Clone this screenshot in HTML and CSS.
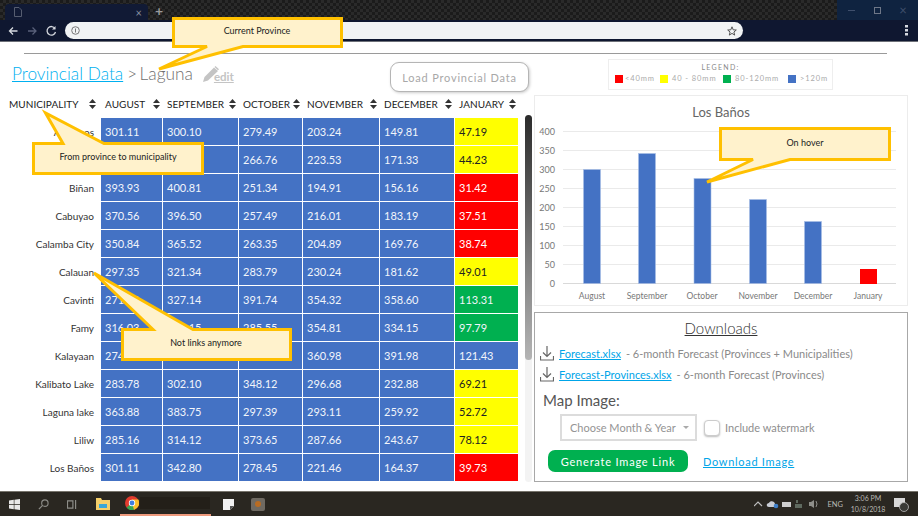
FILE: index.html
```
<!DOCTYPE html>
<html lang="en">
<head>
<meta charset="utf-8">
<title>Provincial Data</title>
<link rel="stylesheet" href="styles.css">
</head>
<body>
<div class="screen">
  <header class="chrome">
    <div class="tabstrip">
      <div class="tab">
        <svg class="tab-doc" width="8" height="10" viewBox="0 0 8 10"><path d="M.5.500h4.500L7.500 3v6.500H.5z" fill="none" stroke="#565d70"/></svg>
        <span class="tab-close">×</span>
      </div>
      <span class="tab-new">+</span>
      <div class="winctl">
        <span class="win-min"></span>
        <span class="win-max"></span>
        <span class="win-close">×</span>
      </div>
    </div>
    <div class="toolbar">
      <svg class="nav" width="50" height="12" viewBox="0 0 50 12">
        <path d="M9.500 6H1.500M5 2.500 1.500 6 5 9.500" fill="none" stroke="#d5d8de" stroke-width="1.300"/>
        <path d="M20 6h8M24.500 2.500 28 6l-3.500 3.500" fill="none" stroke="#59607a" stroke-width="1.300"/>
        <path d="M47 3.500A4.300 4.300 0 1 0 47.500 7" fill="none" stroke="#d5d8de" stroke-width="1.300"/><path d="M47.500 1v3.500H44z" fill="#d5d8de"/>
      </svg>
      <div class="omnibox">
        <svg width="9" height="9" viewBox="0 0 9 9"><circle cx="4.500" cy="4.500" r="3.800" fill="none" stroke="#777"/><path d="M4.500 2.500v4" stroke="#777"/></svg>
        <svg width="10" height="10" viewBox="0 0 10 10"><path d="M5 .8 6.200 3.800 9.300 4 6.900 6 7.700 9.100 5 7.400 2.300 9.100 3.100 6 .7 4 3.800 3.800z" fill="none" stroke="#555"/></svg>
      </div>
      <svg class="menu-dots" width="3" height="11" viewBox="0 0 3 11"><path d="M0 0h3v2.500H0zM0 4h3v2.500H0zM0 8h3v2.500H0z" fill="#d5d8de"/></svg>
    </div>
  </header>

  <main class="page">
    <hr class="rule">
    <div class="topbar">
      <div class="heading">
        <h1 class="crumbs"><a class="crumb-link" href="#">Provincial Data</a><span class="crumb-sep"> &gt; </span>Laguna</h1>
        <span class="edit">
          <svg width="18" height="18" viewBox="0 0 18 18"><path d="M1 17 2.500 12 12 2.500 16 6 6 15.500z" fill="#c4c4c4"/><path d="M13 1.500l3.500 3.300" stroke="#c4c4c4" stroke-width="1.500"/></svg>
          <span class="edit-text">edit</span>
        </span>
      </div>
      <button class="load-btn" type="button">Load Provincial Data</button>
      <div class="legend">
        <div class="legend-title">LEGEND:</div>
        <div class="legend-items">
          <i class="sw sw-red"></i><span class="lg lg1">&lt;40mm</span>
          <i class="sw sw-yellow"></i><span class="lg lg2">40 - 80mm</span>
          <i class="sw sw-green"></i><span class="lg lg3">80-120mm</span>
          <i class="sw sw-blue"></i><span class="lg lg4">&gt;120m</span>
        </div>
      </div>
    </div>

    <div class="content">
      <section class="table-wrap">
        <table class="data">
          <colgroup><col class="c0"><col class="c1"><col class="c2"><col class="c3"><col class="c4"><col class="c5"><col class="c6"></colgroup>
          <thead>
            <tr>
              <th><span class="th-in th-mun">MUNICIPALITY<svg class="sort" viewBox="0 0 7 10"><path d="M3.500 0 7 4H0zM3.500 10 0 6h7z"/></svg></span></th>
              <th><span class="th-in">AUGUST<svg class="sort" viewBox="0 0 7 10"><path d="M3.500 0 7 4H0zM3.500 10 0 6h7z"/></svg></span></th>
              <th><span class="th-in">SEPTEMBER<svg class="sort" viewBox="0 0 7 10"><path d="M3.500 0 7 4H0zM3.500 10 0 6h7z"/></svg></span></th>
              <th><span class="th-in">OCTOBER<svg class="sort" viewBox="0 0 7 10"><path d="M3.500 0 7 4H0zM3.500 10 0 6h7z"/></svg></span></th>
              <th><span class="th-in">NOVEMBER<svg class="sort" viewBox="0 0 7 10"><path d="M3.500 0 7 4H0zM3.500 10 0 6h7z"/></svg></span></th>
              <th><span class="th-in">DECEMBER<svg class="sort" viewBox="0 0 7 10"><path d="M3.500 0 7 4H0zM3.500 10 0 6h7z"/></svg></span></th>
              <th><span class="th-in">JANUARY<svg class="sort" viewBox="0 0 7 10"><path d="M3.500 0 7 4H0zM3.500 10 0 6h7z"/></svg></span></th>
            </tr>
          </thead>
          <tbody>
            <tr><th>Alaminos</th><td>301.11</td><td>300.10</td><td>279.49</td><td>203.24</td><td>149.81</td><td class="y">47.19</td></tr>
            <tr><th></th><td></td><td></td><td>266.76</td><td>223.53</td><td>171.33</td><td class="y">44.23</td></tr>
            <tr><th>Biñan</th><td>393.93</td><td>400.81</td><td>251.34</td><td>194.91</td><td>156.16</td><td class="r">31.42</td></tr>
            <tr><th>Cabuyao</th><td>370.56</td><td>396.50</td><td>257.49</td><td>216.01</td><td>183.19</td><td class="r">37.51</td></tr>
            <tr><th>Calamba City</th><td>350.84</td><td>365.52</td><td>263.35</td><td>204.89</td><td>169.76</td><td class="r">38.74</td></tr>
            <tr><th>Calauan</th><td>297.35</td><td>321.34</td><td>283.79</td><td>230.24</td><td>181.62</td><td class="y">49.01</td></tr>
            <tr><th>Cavinti</th><td>271.80</td><td>327.14</td><td>391.74</td><td>354.32</td><td>358.60</td><td class="g">113.31</td></tr>
            <tr><th>Famy</th><td>316.03</td><td>340.15</td><td>285.55</td><td>354.81</td><td>334.15</td><td class="g">97.79</td></tr>
            <tr><th>Kalayaan</th><td>274.36</td><td></td><td></td><td>360.98</td><td>391.98</td><td>121.43</td></tr>
            <tr><th>Kalibato Lake</th><td>283.78</td><td>302.10</td><td>348.12</td><td>296.68</td><td>232.88</td><td class="y">69.21</td></tr>
            <tr><th>Laguna lake</th><td>363.88</td><td>383.75</td><td>297.39</td><td>293.11</td><td>259.92</td><td class="y">52.72</td></tr>
            <tr><th>Liliw</th><td>285.16</td><td>314.12</td><td>373.65</td><td>287.66</td><td>243.67</td><td class="y">78.12</td></tr>
            <tr><th>Los Baños</th><td>301.11</td><td>342.80</td><td>278.45</td><td>221.46</td><td>164.37</td><td class="r">39.73</td></tr>
          </tbody>
        </table>
        <div class="scrollbar"><div class="thumb"></div></div>
      </section>

      <aside class="side">
        <figure class="chart">
          <svg width="372" height="209" viewBox="535 97 372 209">
            <g class="grid">
              <path d="M563 132.500h333M563 151.500h333M563 170.500h333M563 189.500h333M563 208.500h333M563 227.500h333M563 246.500h333M563 265.500h333"/>
              <path class="axis" d="M563 284.500h333"/>
            </g>
            <text class="ch-title" x="721" y="118">Los Baños</text>
            <g class="ylab">
              <text x="555" y="135.500">400</text><text x="555" y="154.500">350</text><text x="555" y="173.500">300</text><text x="555" y="192.500">250</text><text x="555" y="211.500">200</text><text x="555" y="230.500">150</text><text x="555" y="249.500">100</text><text x="555" y="268.500">50</text><text x="555" y="287.500">0</text>
            </g>
            <g class="bars">
              <rect x="583.500" y="170.500" width="17" height="114"/>
              <rect x="638.500" y="154.500" width="17" height="130"/>
              <rect x="694" y="179.500" width="17" height="105"/>
              <rect x="749.500" y="200.500" width="17" height="84"/>
              <rect x="804.500" y="222.500" width="17" height="62"/>
            </g>
            <rect class="bar-red" x="860" y="270" width="17" height="15"/>
            <g class="xlab">
              <text x="592" y="300">August</text><text x="647" y="300">September</text><text x="702" y="300">October</text><text x="758" y="300">November</text><text x="813" y="300">December</text><text x="868" y="300">January</text>
            </g>
          </svg>
        </figure>

        <section class="downloads">
          <h2 class="dl-title">Downloads</h2>
          <div class="dl-row">
            <svg width="14" height="15" viewBox="0 0 14 15"><path d="M7 0v10M3 6.500 7 10.500l4-4M.5 10v4h13v-4" fill="none" stroke="#666" stroke-width="1.200"/></svg>
            <a class="link" href="#">Forecast.xlsx</a><span class="dl-desc">- 6-month Forecast (Provinces + Municipalities)</span>
          </div>
          <div class="dl-row">
            <svg width="14" height="15" viewBox="0 0 14 15"><path d="M7 0v10M3 6.500 7 10.500l4-4M.5 10v4h13v-4" fill="none" stroke="#666" stroke-width="1.200"/></svg>
            <a class="link" href="#">Forecast-Provinces.xlsx</a><span class="dl-desc">- 6-month Forecast (Provinces)</span>
          </div>
          <h3 class="map-title">Map Image:</h3>
          <div class="map-row">
            <div class="select">Choose Month &amp; Year<i class="caret"></i></div>
            <span class="check"></span>
            <span class="check-label">Include watermark</span>
          </div>
          <div class="action-row">
            <button class="gen-btn" type="button">Generate Image Link</button>
            <a class="link dl-image" href="#">Download Image</a>
          </div>
        </section>
      </aside>
    </div>
  </main>

  <footer class="taskbar">
    <svg class="tb-win" width="11" height="11" viewBox="0 0 11 11"><path d="M0 1.500 4.800.800v4.300H0zM5.400.700 11 0v5.100H5.400zM0 5.800h4.800v4.400L0 9.500zM5.400 5.800H11V11l-5.600-.8z" fill="#e8e8e8"/></svg>
    <svg class="tb-search" width="11" height="11" viewBox="0 0 12 12"><circle cx="7.500" cy="4.500" r="3.500" fill="none" stroke="#8d8d88" stroke-width="1.200"/><path d="M5 7 1 11" stroke="#8d8d88" stroke-width="1.400"/></svg>
    <svg class="tb-view" width="10" height="9" viewBox="0 0 11 10"><path d="M.5 1h6v8h-6zM9.500 0v10" fill="none" stroke="#8d8d88" stroke-width="1.300"/></svg>
    <svg class="tb-folder" width="14" height="12" viewBox="0 0 14 12"><path d="M0 0h5l1 2h8v10H0z" fill="#f4cf6a"/><path d="M3 6h8v4H3z" fill="#38a6d8"/></svg>
    <div class="tb-chrome">
      <svg width="14" height="14" viewBox="0 0 14 14"><circle cx="7" cy="7" r="7" fill="#e23b2e"/><path d="M7 7 1.500 11.500A7 7 0 0 0 10 13.300z" fill="#35a853"/><path d="M7 3.500h6.300A7 7 0 0 1 9 13.700L7 7z" fill="#fbc02d"/><circle cx="7" cy="7" r="3.200" fill="#fff"/><circle cx="7" cy="7" r="2.400" fill="#3f7fe0"/></svg>
      <span class="tb-chrome-title"></span>
    </div>
    <svg class="tb-note" width="11" height="11" viewBox="0 0 11 11"><path d="M0 0h11v7L7 11H0z" fill="#f1f1f1"/><path d="M7 11V7h4z" fill="#555"/></svg>
    <svg class="tb-app" width="14" height="13" viewBox="0 0 14 13"><rect width="14" height="13" rx="2" fill="#6f6a62"/><circle cx="7" cy="6" r="3" fill="#b96c22"/></svg>
    <div class="tray">
      <svg width="66" height="10" viewBox="0 0 66 10">
        <path d="M0 7 4 3l4 4" fill="none" stroke="#c0c0c0" stroke-width="1.100"/>
        <path d="M15 8c-3 0-3-4 0-4 1-3 6-2 6 1 2 0 2 3 0 3z" fill="#c8ccd4"/><circle cx="22" cy="7" r="2.300" fill="#3f7fc8"/>
        <path d="M28 3h9v5h-9z" fill="#cfcfcf"/>
        <path d="M42 1h2v3h-2zM41 5h7v4h-7z" fill="#5f6a5f"/>
        <path d="M55 3h2l3-2v8l-3-2h-2z" fill="#8f8f8a"/><path d="M62 2q2 3 0 6" fill="none" stroke="#8f8f8a"/>
      </svg>
      <span class="tray-lang">ENG</span>
      <div class="tray-clock"><span>3:06 PM</span><span>10/8/2018</span></div>
      <svg class="tray-note" width="17" height="15" viewBox="0 0 17 15"><path d="M1 1h11v9H1z" fill="#d8d8d8"/><circle cx="11" cy="10" r="4.500" fill="#3a3a36" stroke="#bbb" stroke-width=".8"/></svg>
    </div>
  </footer>

  <svg class="callouts" width="918" height="516" viewBox="0 0 918 516">
    <g class="co">
      <path d="M173.500 18.500H341.500V46.500H243L159 69 207 46.500H173.500z"/>
      <path d="M33.500 143.500H63L45.500 113 104 143.500H202.500V173.500H33.500z"/>
      <path d="M122.500 329.500H153L94 273 193 329.500H290.500V359.500H122.500z"/>
      <path d="M720.500 128.500H889.500V159.500H790L707 182 753 159.500H720.500z"/>
    </g>
    <g class="co-text">
      <text x="257" y="34">Current Province</text>
      <text x="118" y="160">From province to municipality</text>
      <text x="206" y="346">Not links anymore</text>
      <text x="805" y="146">On hover</text>
    </g>
  </svg>
</div>
</body>
</html>
```

FILE: styles.css
```
* { box-sizing: border-box; }
html, body { margin: 0; padding: 0; background: #fff; }
body { font-family: "Lato", "Open Sans", sans-serif; color: #222; }
.screen { position: relative; width: 918px; height: 516px; overflow: hidden; display: flex; flex-direction: column; }

/* Browser chrome */
.chrome { height: 42px; flex: none; border-bottom: 1px solid #6d7078; }
.tabstrip {
  height: 20px; display: flex; align-items: flex-end; position: relative;
  background-color: #1b1b1b;
  background-image: linear-gradient(45deg, #2a2a2a 25%, transparent 25%, transparent 75%, #2a2a2a 75%), linear-gradient(45deg, #2a2a2a 25%, transparent 25%, transparent 75%, #2a2a2a 75%);
  background-size: 6px 6px; background-position: 0 0, 3px 3px;
}
.tab { width: 143px; height: 16px; margin-left: 5px; background: #111a35; border-radius: 4px 4px 0 0; display: flex; align-items: center; justify-content: space-between; padding: 0 6px 0 9px; }
.tab-close { color: #8a90a0; font-size: 11px; line-height: 1; }
.tab-new { color: #9a9a9a; font-size: 14px; line-height: 18px; margin-left: 7px; font-weight: 700; }
.winctl { margin-left: auto; width: 81px; height: 20px; background: #0f2340; display: flex; align-items: center; justify-content: space-around; padding: 0 2px; color: #3f4f6c; }
.win-min { width: 7px; height: 1px; background: #3f4f6c; }
.win-max { width: 7px; height: 7px; border: 1px solid #6e7788; }
.win-close { font-size: 13px; line-height: 1; }
.toolbar { height: 21px; background: #0f1730; display: flex; align-items: center; padding: 0 10px 0 8px; }
.nav { flex: none; }
.omnibox { width: 678px; height: 17px; margin-left: 7px; background: #f1f3f4; border-radius: 9px; display: flex; align-items: center; justify-content: space-between; padding: 0 6px 0 6px; }
.menu-dots { margin-left: auto; }

/* Page */
.page { flex: 1; min-height: 0; }
.rule { height: 1px; border: 0; background: #9a9a9a; margin: 11px 31px 0 24px; }
.topbar { height: 41px; display: flex; align-items: flex-start; position: relative; }
.heading { width: 390px; padding: 7px 0 0 12px; display: flex; align-items: center; }
.crumbs { margin: 0; font-size: 17.300px; line-height: 26px; font-weight: 300; color: #6f6f6f; white-space: nowrap; }
.crumb-link { color: #00b0f0; text-decoration: underline; text-decoration-thickness: 1px; }
.crumb-sep { margin: 0 -2px 0 -1px; }
.edit { display: flex; align-items: flex-end; margin-left: 9px; }
.edit-text { font-size: 11.500px; line-height: 13px; margin-left: -6px; color: #c4c4c4; text-decoration: underline; font-weight: 700; }
.load-btn { width: 139px; height: 30px; margin-top: 8px; flex: none; background: #fff; border: 1px solid #b5b5b5; border-radius: 9px; color: #a8a8a8; font: 400 11px "Lato", sans-serif; letter-spacing: .8px; box-shadow: 1px 1px 3px #ccc; padding: 0; }
.legend { width: 225px; height: 31px; margin: 5px 0 0 79px; flex: none; border: 1px solid #eeeeee; padding-top: 3px; }
.legend-title { font-size: 7px; line-height: 9px; letter-spacing: 1.300px; color: #8a8a8a; text-align: center; }
.legend-items { display: flex; align-items: center; padding: 2px 0 0 6px; font-size: 7.500px; letter-spacing: .9px; color: #aaa; white-space: nowrap; }
.sw { width: 8px; height: 8px; flex: none; }
.sw-red { background: #ff0000; }
.sw-yellow { background: #ffff00; }
.sw-green { background: #00b050; }
.sw-blue { background: #4472c4; }
.lg { flex: none; }
.lg1 { width: 35px; margin-left: 2px; }
.lg2 { width: 51px; margin-left: 4px; }
.lg3 { width: 53px; margin-left: 4px; }
.lg4 { margin-left: 4px; }

.content { display: flex; align-items: flex-start; }
.table-wrap { width: 534px; flex: none; display: flex; align-items: flex-start; }
.data { border-collapse: separate; border-spacing: 0; table-layout: fixed; width: 519px; flex: none; font-size: 10px; }
.c0 { width: 101px; } .c1 { width: 62px; } .c2 { width: 76px; } .c3 { width: 64px; } .c4 { width: 77px; } .c5 { width: 75px; } .c6 { width: 64px; }
.data thead th { height: 23px; padding: 0; vertical-align: top; font-weight: 400; text-align: left; }
.th-in { display: flex; align-items: center; justify-content: space-between; height: 17px; padding: 0 3px 0 4px; font-size: 10px; letter-spacing: .05px; color: #222; white-space: nowrap; }
.th-mun { padding: 0 5px 0 9px; }
.sort { width: 7px; height: 10px; fill: #333; flex: none; }
.data tbody th { height: 28px; padding: 0 7px 1px 0; text-align: right; font-weight: 400; font-size: 10px; color: #333; white-space: nowrap; }
.data td { height: 28px; padding: 0 0 1px 4px; background: #4472c4; border-right: 1px solid #fff; border-bottom: 1px solid #fff; color: #f2f5fb; font-size: 11px; }
.data td.y { background: #ffff00; color: #222; }
.data td.r { background: #ff0000; color: #fff; }
.data td.g { background: #00b050; color: #f2f5fb; }
.scrollbar { width: 7px; height: 367px; margin: 20px 0 0 6px; background: #f3f3f3; border-radius: 4px; flex: none; }
.thumb { height: 245px; background: linear-gradient(#2b2b2b, #b5b5b5); border-radius: 4px; }

/* Right column */
.side { width: 374px; flex: none; }
.chart { margin: 0; width: 374px; height: 211px; border: 1px solid #ececec; }
.chart svg { display: block; }
.grid path { stroke: #eaeaea; stroke-width: 1; fill: none; }
.grid .axis { stroke: #d9d9d9; }
.ch-title { font-size: 13px; fill: #666; text-anchor: middle; }
.ylab text { font-size: 9px; fill: #777; text-anchor: end; }
.xlab text { font-size: 8.500px; fill: #777; text-anchor: middle; }
.bars rect { fill: #4472c4; stroke: #a9bfe6; stroke-width: .6; }
.bar-red { fill: #ff0000; }

.downloads { margin-top: 6px; width: 374px; height: 170px; border: 1px solid #a8a8a8; padding: 6px 5px 0 5px; }
.dl-title { margin: 0 0 6px; font-size: 15px; line-height: 18px; font-weight: 300; text-align: center; color: #333; text-decoration: underline; text-decoration-thickness: 1px; }
.dl-row { height: 21px; display: flex; align-items: center; font-size: 11px; white-space: nowrap; color: #8a8a8a; }
.dl-row svg { flex: none; margin-right: 5px; }
.link { color: #00a5e8; text-decoration: underline; }
.dl-desc { margin-left: 5px; }
.map-title { margin: 6px 0 5px 3px; font-size: 15px; line-height: 18px; font-weight: 400; color: #555; }
.map-row { display: flex; align-items: center; padding-left: 20px; }
.select { width: 137px; height: 27px; border: 2px solid #dcdcdc; display: flex; align-items: center; padding: 0 6px 0 8px; font-size: 11px; color: #949494; justify-content: space-between; }
.caret { border: 3px solid transparent; border-top: 3px solid #aaa; border-bottom: 0; }
.check { width: 16px; height: 16px; margin-left: 7px; border: 1px solid #ccc; border-radius: 4px; background: #fff; box-shadow: 0 1px 2px #bbb; }
.check-label { margin-left: 5px; font-size: 11px; color: #8e8e8e; }
.action-row { display: flex; align-items: center; margin-top: 9px; padding-left: 8px; }
.gen-btn { width: 140px; height: 22px; background: #00b050; border: 0; border-radius: 7px; color: #fff; font: 400 11px "Lato", sans-serif; letter-spacing: .8px; padding: 0; }
.dl-image { margin-left: 15px; font-size: 11px; letter-spacing: .7px; }

/* Taskbar */
.taskbar { height: 25px; flex: none; margin-top: auto; background: #2a2721; border-top: 1px solid #77746c; position: relative; display: flex; align-items: center; padding-left: 9px; }
.tb-search { margin-left: 18px; }
.tb-view { margin-left: 18px; }
.tb-folder { margin-left: 19px; }
.tb-chrome { width: 91px; height: 24px; margin-left: 10px; display: flex; align-items: center; padding-left: 5px; border-bottom: 2px solid #ee9a7d; }
.tb-chrome-title { width: 70px; height: 12px; margin-left: 1px; background: #231f19; }
.tb-note { margin-left: 12px; }
.tb-app { margin-left: 17px; }
.tray { margin-left: auto; display: flex; align-items: center; color: #b8b8b4; padding-right: 8px; }
.tray-lang { margin-left: 7px; font-size: 7.500px; }
.tray-clock { margin-left: 8px; display: flex; flex-direction: column; align-items: center; font-size: 7px; line-height: 11px; width: 34px; }
.tray-note { margin-left: 8px; }

/* Annotation callouts over the page */
.callouts { position: absolute; left: 0; top: 0; pointer-events: none; }
.co path { fill: #fff2cc; stroke: #ffc000; stroke-width: 3; stroke-linejoin: miter; }
.co-text text { font-size: 9px; fill: #222; text-anchor: middle; }
```
